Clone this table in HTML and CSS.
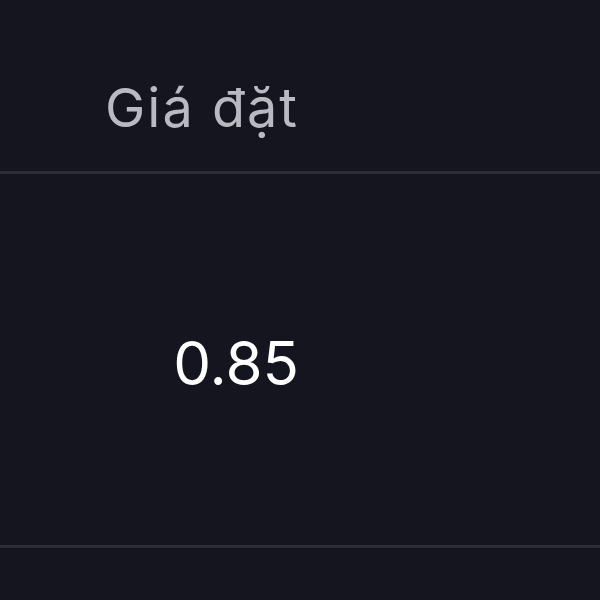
FILE: index.html
```html
<!doctype html>
<html lang="vi">
  <head>
    <meta charset="UTF-8" />
    <title>Giá đặt</title>
    <link rel="stylesheet" href="styles.css">
  </head>
  <body>
    <div class="order-table">
      <div class="table-head">
        <div class="cell price-col">Giá đặt</div>
      </div>
      <div class="table-row">
        <div class="cell price-col value">0.85</div>
      </div>
    </div>
  </body>
</html>
```

FILE: styles.css
```css
body {
  margin: 0;
  background: #151520;
  font-family: Inter, "Noto Sans", sans-serif;
  overflow: hidden;
}

.order-table {
  width: 600px;
}

.table-head {
  display: flex;
  align-items: flex-end;
  height: 174px;
  border-bottom: 3px solid #2c2c37;
  box-sizing: border-box;
}

.table-row {
  display: flex;
  align-items: center;
  height: 374px;
  border-bottom: 3px solid #2c2c37;
  box-sizing: border-box;
}

.cell {
  width: 300px;
  text-align: right;
  padding-right: 1px;
  box-sizing: border-box;
}

.table-head .cell {
  color: #b9b9c2;
  font-size: 54px;
  letter-spacing: 2px;
  padding-bottom: 31px;
}

.value {
  color: #ffffff;
  font-size: 60px;
  padding-top: 6px;
}
```
